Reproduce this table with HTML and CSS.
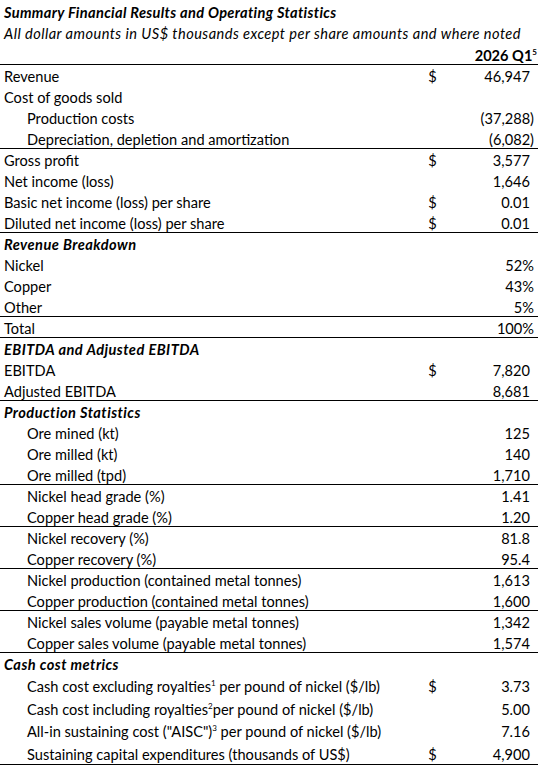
FILE: index.html
```html
<!DOCTYPE html>
<html lang="en">
<head>
  <meta charset="UTF-8">
  <title>Summary Financial Results and Operating Statistics</title>
  <meta name="viewport" content="width=device-width, initial-scale=1.0">
  <link rel="stylesheet" href="styles.css">
</head>
<body>
  <div class="sheet">
    <div class="title">Summary Financial Results and Operating Statistics</div>
    <div class="subtitle">All dollar amounts in US$ thousands except per share amounts and where noted</div>

    <div class="row head rule"><span></span><span></span><span class="val">2026 Q1<sup>5</sup></span></div>

    <div class="row"><span>Revenue</span><span class="cur">$</span><span class="val">46,947</span></div>
    <div class="row"><span>Cost of goods sold</span><span></span><span></span></div>
    <div class="row"><span class="ind">Production costs</span><span></span><span class="val neg">(37,288)</span></div>
    <div class="row rule"><span class="ind">Depreciation, depletion and amortization</span><span></span><span class="val neg">(6,082)</span></div>
    <div class="row"><span>Gross profit</span><span class="cur">$</span><span class="val">3,577</span></div>
    <div class="row"><span>Net income (loss)</span><span></span><span class="val">1,646</span></div>
    <div class="row"><span>Basic net income (loss) per share</span><span class="cur">$</span><span class="val">0.01</span></div>
    <div class="row rule"><span>Diluted net income (loss) per share</span><span class="cur">$</span><span class="val">0.01</span></div>

    <div class="row sec"><span>Revenue Breakdown</span><span></span><span></span></div>
    <div class="row"><span>Nickel</span><span></span><span class="val neg">52%</span></div>
    <div class="row"><span>Copper</span><span></span><span class="val neg">43%</span></div>
    <div class="row rule"><span>Other</span><span></span><span class="val neg">5%</span></div>
    <div class="row rule"><span>Total</span><span></span><span class="val neg">100%</span></div>

    <div class="row sec"><span>EBITDA and Adjusted EBITDA</span><span></span><span></span></div>
    <div class="row"><span>EBITDA</span><span class="cur">$</span><span class="val">7,820</span></div>
    <div class="row rule"><span>Adjusted EBITDA</span><span></span><span class="val">8,681</span></div>

    <div class="row sec"><span>Production Statistics</span><span></span><span></span></div>
    <div class="row"><span class="ind">Ore mined (kt)</span><span></span><span class="val">125</span></div>
    <div class="row"><span class="ind">Ore milled (kt)</span><span></span><span class="val">140</span></div>
    <div class="row rule"><span class="ind">Ore milled (tpd)</span><span></span><span class="val">1,710</span></div>
    <div class="row"><span class="ind">Nickel head grade (%)</span><span></span><span class="val">1.41</span></div>
    <div class="row rule"><span class="ind">Copper head grade (%)</span><span></span><span class="val">1.20</span></div>
    <div class="row"><span class="ind">Nickel recovery (%)</span><span></span><span class="val">81.8</span></div>
    <div class="row rule"><span class="ind">Copper recovery (%)</span><span></span><span class="val">95.4</span></div>
    <div class="row"><span class="ind">Nickel production (contained metal tonnes)</span><span></span><span class="val">1,613</span></div>
    <div class="row rule"><span class="ind">Copper production (contained metal tonnes)</span><span></span><span class="val">1,600</span></div>
    <div class="row"><span class="ind">Nickel sales volume (payable metal tonnes)</span><span></span><span class="val">1,342</span></div>
    <div class="row rule"><span class="ind">Copper sales volume (payable metal tonnes)</span><span></span><span class="val">1,574</span></div>

    <div class="row sec tall-first"><span>Cash cost metrics</span><span></span><span></span></div>
    <div class="row tall"><span class="ind">Cash cost excluding royalties<sup>1</sup> per pound of nickel ($/lb)</span><span class="cur">$</span><span class="val">3.73</span></div>
    <div class="row tall"><span class="ind">Cash cost including royalties<sup>2</sup>per pound of nickel ($/lb)</span><span></span><span class="val">5.00</span></div>
    <div class="row tall"><span class="ind">All-in sustaining cost ("AISC")<sup>3</sup> per pound of nickel ($/lb)</span><span></span><span class="val">7.16</span></div>
    <div class="row tall rule"><span class="ind">Sustaining capital expenditures (thousands of US$)</span><span class="cur">$</span><span class="val">4,900</span></div>
  </div>
</body>
</html>
```

FILE: styles.css
```css
body { margin: 0; background: #fff; color: #000; font-family: Lato, "Open Sans", sans-serif; font-size: 14.6px; }
.sheet { width: 538px; padding-top: 2px; }

.title { font-weight: bold; font-style: italic; letter-spacing: 0.33px; height: 21px; line-height: 21px; padding-left: 4px; }
.subtitle { font-style: italic; letter-spacing: 0.45px; height: 21px; line-height: 21px; padding-left: 4px; }

.row {
  display: grid; grid-template-columns: 415px 35px 88px;
  height: 21px; line-height: 19px; padding-top: 2px; box-sizing: border-box;
  white-space: nowrap;
}
.row > span:first-child { padding-left: 4px; }
.row > span.ind { padding-left: 27px; }
.row.rule { border-bottom: 1px solid #000; }
.row.head { font-weight: bold; }
.row.sec { font-weight: bold; font-style: italic; letter-spacing: 0.45px; }
.row.tall-first { height: 22px; line-height: 20px; }
.row.tall { height: 22.5px; line-height: 20.5px; }

.cur { text-align: center; }
.val { text-align: right; padding-right: 8px; }
.val.neg { padding-right: 4px; }
.head .val { padding-right: 1px; }

sup { font-size: 8px; line-height: 0; vertical-align: 6px; letter-spacing: 0; }
```
